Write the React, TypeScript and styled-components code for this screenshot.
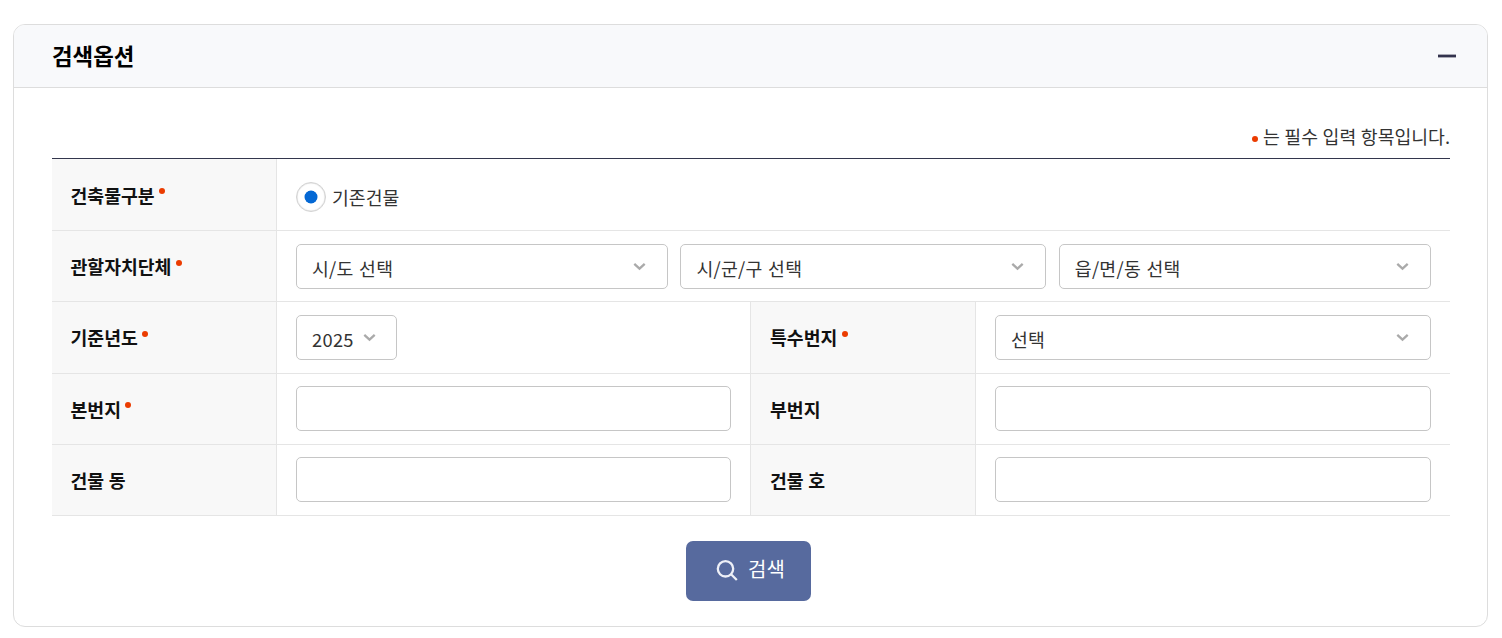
import React from "react";
import styled, { createGlobalStyle } from "styled-components";

const GlobalStyle = createGlobalStyle`
  *, *::before, *::after { box-sizing: border-box; }
  body {
    margin: 0;
    background: #fff;
    color: #333;
    font-family: "Noto Sans CJK KR", "Noto Sans", sans-serif;
    font-size: 18.3px;
    word-spacing: 0.5px;
    overflow: hidden;
  }
`;

const Panel = styled.section`
  width: 1475px;
  height: 603px;
  margin: 24px 0 0 13px;
  border: 1px solid #ddd;
  border-radius: 12px;
  overflow: hidden;
  background: #fff;
`;

const PanelHeader = styled.header`
  display: flex;
  align-items: center;
  justify-content: space-between;
  height: 63px;
  padding: 0 31px 0 38px;
  background: #f8f9fb;
  border-bottom: 1px solid #ddd;
`;

const Title = styled.h2`
  margin: 0;
  padding-bottom: 2px;
  font-size: 22.4px;
  line-height: 32px;
  font-weight: 700;
  color: #000;
`;

const ToggleButton = styled.button`
  display: flex;
  padding: 0;
  border: 0;
  background: none;
`;

const PanelBody = styled.div`
  display: flex;
  flex-direction: column;
  padding: 32px 37px 0 38px;
`;

const Notice = styled.p`
  display: flex;
  align-items: flex-start;
  justify-content: flex-end;
  gap: 5px;
  height: 38px;
  margin: 0;
  line-height: 32px;
`;

const Dot = styled.span<{ $top: number; $gap?: number }>`
  flex: none;
  width: 6px;
  height: 6px;
  border-radius: 50%;
  background: #eb3c00;
  margin-top: ${(p) => p.$top}px;
  margin-left: ${(p) => p.$gap ?? 0}px;
`;

const FormTable = styled.div`
  border-top: 1px solid #33364d;
`;

const Row = styled.div<{ $height: number; $split?: boolean }>`
  display: grid;
  grid-template-columns: ${(p) => (p.$split ? "225px 473px 226px 474px" : "225px 1fr")};
  height: ${(p) => p.$height}px;
  border-bottom: 1px solid #e5e5e5;
`;

const LabelCell = styled.div<{ $inner?: boolean; $top: number }>`
  display: flex;
  align-items: flex-start;
  padding: ${(p) => p.$top}px 0 0 ${(p) => (p.$inner ? 19 : 18.5)}px;
  background: #f8f8f8;
  border-right: 1px solid #e5e5e5;
  border-left: ${(p) => (p.$inner ? "1px solid #e5e5e5" : "0")};
  color: #111;
  font-weight: 700;
  line-height: 40px;
`;

const FieldCell = styled.div<{ $top: number }>`
  display: flex;
  align-items: flex-start;
  padding: ${(p) => p.$top}px 19px 0;
`;

const SelectGroup = styled.div`
  display: grid;
  grid-template-columns: 372px 366px 372px;
  column-gap: 12.4px;
  width: 100%;
`;

const SelectBox = styled.button<{ $compact?: boolean }>`
  display: flex;
  align-items: center;
  justify-content: space-between;
  width: ${(p) => (p.$compact ? "101px" : "100%")};
  height: 45px;
  padding: 2px ${(p) => (p.$compact ? 20 : 21)}px 0 15px;
  border: 1px solid #c6c6c6;
  border-radius: 5px;
  background: #fff;
  color: #333;
  font: inherit;
  line-height: 40px;
  letter-spacing: 0.3px;
  word-spacing: 1px;
`;

const ChevronIcon = styled.svg`
  flex: none;
  margin-top: -3px;
`;

const TextInput = styled.input`
  width: 100%;
  height: 45px;
  padding: 0 15px;
  border: 1px solid #c6c6c6;
  border-radius: 5px;
  background: #fff;
  font: inherit;
`;

const RadioLabel = styled.label`
  display: flex;
  align-items: center;
  gap: 6px;
  height: 30px;
`;

const RadioMark = styled.span`
  display: flex;
  align-items: center;
  justify-content: center;
  width: 30px;
  height: 30px;
  border: 1px solid #d2d2d2;
  border-radius: 50%;
  box-shadow: inset 0 0 1px 0.5px #ddd;

  &::after {
    content: "";
    width: 12px;
    height: 12px;
    border-radius: 50%;
    background: #0468d4;
    box-shadow: 0 0 0 0.5px #0468d4;
  }
`;

const RadioText = styled.span`
  line-height: 30px;
`;

const SearchButton = styled.button`
  display: flex;
  align-items: center;
  align-self: center;
  gap: 10px;
  width: 125px;
  height: 60px;
  margin: 25px 0 0 -5px;
  padding: 0 0 5px 30px;
  border: 0;
  border-radius: 7px;
  background: #576a9e;
  color: #fff;
  font: inherit;
  font-size: 20px;
  line-height: 40px;
`;

const SearchIcon = styled.svg`
  flex: none;
  margin-top: 3px;
`;

interface LabelProps {
  text: string;
  required?: boolean;
  inner?: boolean;
  top?: number;
  dotTop?: number;
}

function Label({ text, required, inner, top = 15, dotTop = 14 }: LabelProps) {
  return (
    <LabelCell $inner={inner} $top={top}>
      {text}
      {required && <Dot $top={dotTop} $gap={4.4} />}
    </LabelCell>
  );
}

function Select({ value, compact }: { value: string; compact?: boolean }) {
  return (
    <SelectBox type="button" $compact={compact}>
      {value}
      <ChevronIcon width="13" height="9" viewBox="0 0 13 9" fill="none">
        <path d="M1.3 1.9 6.5 6.7l5.2-4.8" stroke="#aaa" strokeWidth="2.3" />
      </ChevronIcon>
    </SelectBox>
  );
}

export default function App() {
  return (
    <>
      <GlobalStyle />
      <Panel>
        <PanelHeader>
          <Title>검색옵션</Title>
          <ToggleButton type="button" aria-label="접기">
            <svg width="18" height="4" viewBox="0 0 18 4">
              <rect y="0.6" width="18" height="2.8" fill="#33334d" />
            </svg>
          </ToggleButton>
        </PanelHeader>
        <PanelBody>
          <Notice>
            <Dot $top={16} />는 필수 입력 항목입니다.
          </Notice>
          <FormTable>
            <Row $height={72}>
              <Label text="건축물구분" required top={16} dotTop={13} />
              <FieldCell $top={23}>
                <RadioLabel>
                  <RadioMark />
                  <RadioText>기존건물</RadioText>
                </RadioLabel>
              </FieldCell>
            </Row>
            <Row $height={71}>
              <Label text="관할자치단체" required />
              <FieldCell $top={13}>
                <SelectGroup>
                  <Select value="시/도 선택" />
                  <Select value="시/군/구 선택" />
                  <Select value="읍/면/동 선택" />
                </SelectGroup>
              </FieldCell>
            </Row>
            <Row $height={72} $split>
              <Label text="기준년도" required />
              <FieldCell $top={13}>
                <Select value="2025" compact />
              </FieldCell>
              <Label text="특수번지" required inner />
              <FieldCell $top={13}>
                <Select value="선택" />
              </FieldCell>
            </Row>
            <Row $height={71} $split>
              <Label text="본번지" required dotTop={13} />
              <FieldCell $top={12}>
                <TextInput aria-label="본번지" />
              </FieldCell>
              <Label text="부번지" inner />
              <FieldCell $top={12}>
                <TextInput aria-label="부번지" />
              </FieldCell>
            </Row>
            <Row $height={71} $split>
              <Label text="건물 동" />
              <FieldCell $top={12}>
                <TextInput aria-label="건물 동" />
              </FieldCell>
              <Label text="건물 호" inner />
              <FieldCell $top={12}>
                <TextInput aria-label="건물 호" />
              </FieldCell>
            </Row>
          </FormTable>
          <SearchButton type="button">
            <SearchIcon width="22" height="22" viewBox="0 0 22 22" fill="none" stroke="#eef0f7" strokeWidth="2.3">
              <circle cx="9.5" cy="9.8" r="7.7" />
              <path d="m14.8 15 6 6" />
            </SearchIcon>
            검색
          </SearchButton>
        </PanelBody>
      </Panel>
    </>
  );
}
